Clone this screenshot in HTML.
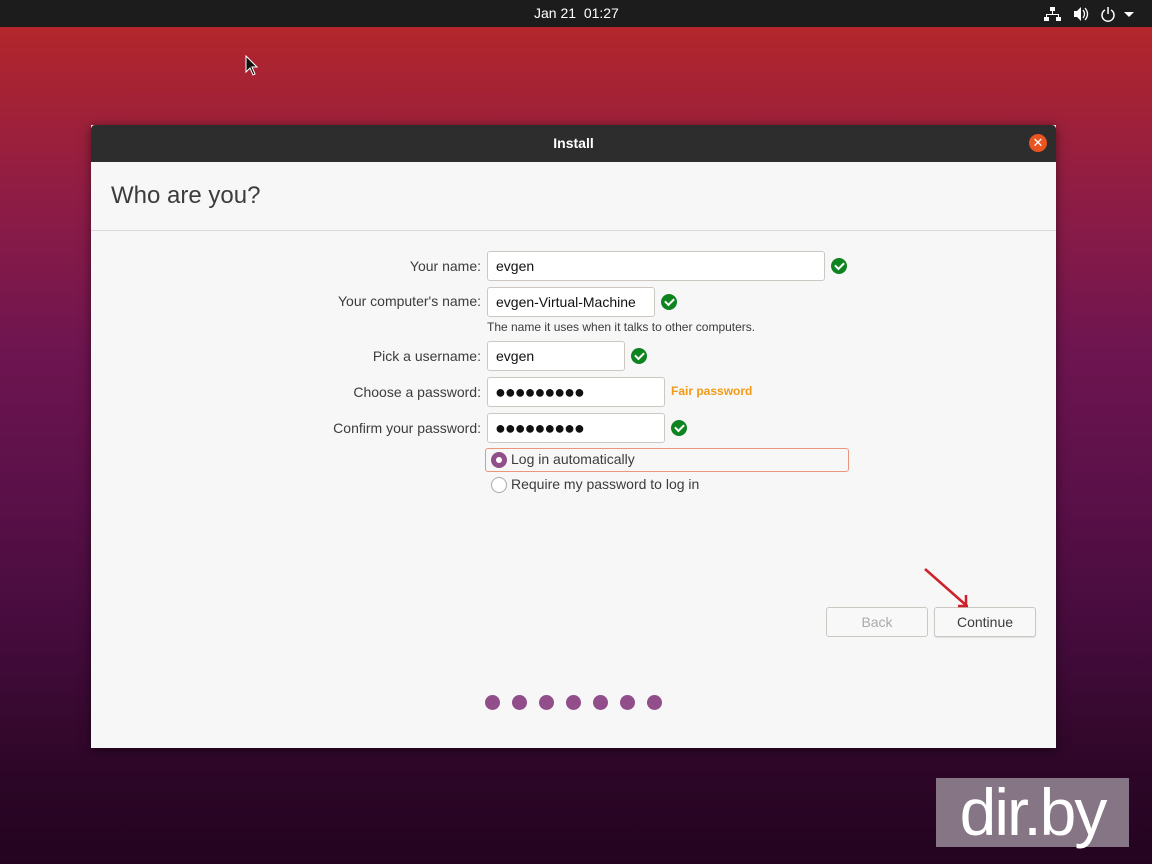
<!DOCTYPE html>
<html><head><meta charset="utf-8"><style>
*{margin:0;padding:0;box-sizing:border-box}
body{width:1152px;height:864px;overflow:hidden;position:relative;font-family:"Liberation Sans","DejaVu Sans",sans-serif;
background:linear-gradient(180deg,#b3262c 27px,#a32236 100px,#8e1c45 200px,#6e1550 350px,#5a1048 500px,#420b3a 650px,#2c0626 780px,#230420 864px);}
.top{position:absolute;left:0;top:0;width:1152px;height:27px;background:#1c1c1c;color:#fff;font-size:14px;}
.win{position:absolute;left:91px;top:125px;width:965px;height:623px;background:#f7f7f7;box-shadow:0 2px 10px rgba(0,0,0,.5)}
.tb{height:37px;background:#2d2d2d;color:#fff;font-weight:bold;font-size:14px;text-align:center;line-height:37px;border-radius:4px 4px 0 0}
.h{position:absolute;left:20px;top:57px;font-size:24px;color:#3c3c3c}
.hr{position:absolute;left:0;top:105px;width:965px;height:1px;background:#dadada}
.lab{position:absolute;right:575px;font-size:14px;color:#3c3c3c;text-align:right;white-space:nowrap}
.in{position:absolute;left:396px;height:30px;background:#fff;border:1px solid #cdc7c2;border-radius:3px;font-size:14px;color:#111;padding-left:8px;line-height:28px}
.ok{position:absolute;width:16px;height:16px;border-radius:50%;background:#0e8420}
.ok:after{content:"";position:absolute;left:4px;top:4px;width:7px;height:4px;border-left:2px solid #fff;border-bottom:2px solid #fff;transform:rotate(-45deg)}
.dots{letter-spacing:-1px;font-size:18px;padding-left:7px}
.btn{position:absolute;top:482px;height:30px;width:102px;border:1px solid #cdc7c2;border-radius:3px;background:#f8f8f8;font-size:14px;text-align:center;line-height:28px}
.dot{position:absolute;top:570px;width:15px;height:15px;border-radius:50%;background:#924d8b}
</style></head><body>
<div class="top"><div style="position:absolute;left:534px;top:5px">Jan 21&nbsp; 01:27</div>
<svg style="position:absolute;left:1044px;top:6px" width="100" height="16" viewBox="0 0 100 16" fill="#fff">
<rect x="6" y="1" width="5" height="4"/><rect x="8" y="5" width="1" height="4"/><rect x="2" y="8" width="13" height="1"/><rect x="2" y="8" width="1" height="3"/><rect x="14" y="8" width="1" height="3"/><rect x="0" y="11" width="5" height="4"/><rect x="12" y="11" width="5" height="4"/>
<path d="M30 5h3l4-4v14l-4-4h-3z"/><path d="M39 4q3 4 0 8M41 2q5 6 0 12" stroke="#fff" fill="none" stroke-width="1.3"/>
<path d="M61 4a6 6 0 1 0 6 0" stroke="#fff" fill="none" stroke-width="1.5"/><rect x="63.3" y="1" width="1.5" height="7"/>
<path d="M80 6h10l-5 5z"/></svg></div>
<svg style="position:absolute;left:245px;top:55px" width="14" height="22"><path d="M1 1v16l4-4 3 7 2-1-3-7h5z" fill="#111" stroke="#fff" stroke-width="1"/></svg>
<div class="win">
<div class="tb">Install</div>
<div style="position:absolute;left:938px;top:9px;width:18px;height:18px;border-radius:50%;background:#e95420;color:#fff;font-size:13px;line-height:18px;text-align:center">✕</div>
<div class="h">Who are you?</div>
<div class="hr"></div>
<div class="lab" style="top:133px">Your name:</div>
<div class="in" style="top:126px;width:338px">evgen</div><div class="ok" style="left:740px;top:133px"></div>
<div class="lab" style="top:168px">Your computer's name:</div>
<div class="in" style="top:162px;width:168px">evgen-Virtual-Machine</div><div class="ok" style="left:570px;top:169px"></div>
<div style="position:absolute;left:396px;top:195px;font-size:12px;color:#3c3c3c">The name it uses when it talks to other computers.</div>
<div class="lab" style="top:223px">Pick a username:</div>
<div class="in" style="top:216px;width:138px">evgen</div><div class="ok" style="left:540px;top:223px"></div>
<div class="lab" style="top:259px">Choose a password:</div>
<div class="in dots" style="top:252px;width:178px">●●●●●●●●●</div>
<div style="position:absolute;left:580px;top:259px;font-size:12px;font-weight:bold;color:#f29a15">Fair password</div>
<div class="lab" style="top:295px">Confirm your password:</div>
<div class="in dots" style="top:288px;width:178px">●●●●●●●●●</div><div class="ok" style="left:580px;top:295px"></div>
<div style="position:absolute;left:394px;top:323px;width:364px;height:24px;border:1px solid #e9967a;border-radius:3px"></div>
<div style="position:absolute;left:400px;top:327px;width:16px;height:16px;border-radius:50%;background:#924d8b"><div style="margin:5px;width:6px;height:6px;border-radius:50%;background:#fff"></div></div>
<div style="position:absolute;left:420px;top:326px;font-size:14px;color:#3c3c3c">Log in automatically</div>
<div style="position:absolute;left:400px;top:352px;width:16px;height:16px;border-radius:50%;border:1px solid #aaa;background:#fff"></div>
<div style="position:absolute;left:420px;top:351px;font-size:14px;color:#3c3c3c">Require my password to log in</div>
<div class="btn" style="left:735px;color:#aaa">Back</div>
<div class="btn" style="left:843px;color:#3c3c3c;box-shadow:0 1px 1px rgba(0,0,0,.1)">Continue</div>
<svg style="position:absolute;left:830px;top:440px" width="50" height="45"><path d="M4 4l42 37M37 41h10M45 30v11" stroke="#d0202a" stroke-width="2.5" fill="none"/></svg>
<div class="dot" style="left:394px"></div><div class="dot" style="left:421px"></div><div class="dot" style="left:448px"></div><div class="dot" style="left:475px"></div><div class="dot" style="left:502px"></div><div class="dot" style="left:529px"></div><div class="dot" style="left:556px"></div>
</div>
<div style="position:absolute;left:936px;top:778px;width:193px;height:69px;background:#857585;color:#fff;font-size:66px;line-height:69px;text-align:center;letter-spacing:-2px">dir.by</div>
</body></html>
